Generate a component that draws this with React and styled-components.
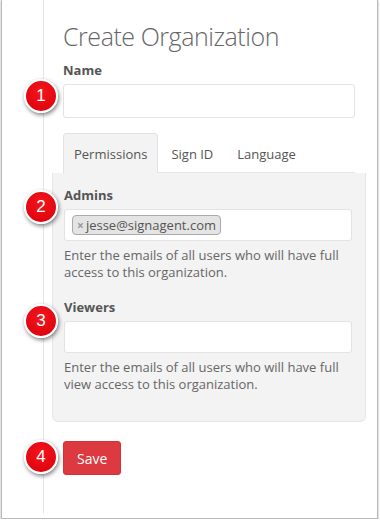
import styled, { createGlobalStyle } from "styled-components";

const GlobalStyle = createGlobalStyle`
  html, body {
    margin: 0;
    padding: 0;
    background: #fff;
  }
  body {
    font-family: "Open Sans", "Liberation Sans", sans-serif;
    color: #555;
  }
`;

const steps = [
  { n: 1, top: 79 },
  { n: 2, top: 190 },
  { n: 3, top: 304 },
  { n: 4, top: 440 },
];

function App() {
  return (
    <>
      <GlobalStyle />
      <Frame>
        <Gutter />
        <Content>
          <Title>Create Organization</Title>
          <Label gap={10}>Name</Label>
          <Input tall />

          <Tabs>
            <Tab active>Permissions</Tab>
            <Tab>Sign ID</Tab>
            <Tab>Language</Tab>
          </Tabs>
          <Panel>
            <Label gap={0}>Admins</Label>
            <Input>
              <Tag>
                <span>×</span>jesse@signagent.com
              </Tag>
            </Input>
            <Help>
              Enter the emails of all users who will have full access to this
              organization.
            </Help>

            <Label gap={17}>Viewers</Label>
            <Input />
            <Help>
              Enter the emails of all users who will have full view access to
              this organization.
            </Help>
          </Panel>

          <SaveButton>Save</SaveButton>
        </Content>

        {steps.map((s) => (
          <Step key={s.n} style={{ top: s.top }}>
            {s.n}
          </Step>
        ))}
      </Frame>
    </>
  );
}

const Frame = styled.div`
  position: relative;
  box-sizing: border-box;
  display: flex;
  width: 377px;
  height: 519px;
  margin-left: 1px;
  background: #fff;
  border: 1px solid #b9b9b9;
  border-top: none;
  box-shadow: 0 1px 2px rgba(0, 0, 0, 0.35);
`;

const Gutter = styled.div`
  flex: none;
  width: 41px;
  margin-bottom: 4px;
  border-right: 1px solid #e6e6e6;
`;

const Content = styled.div`
  flex: 1;
  padding: 21px 22px 0 19px;
  display: flex;
  flex-direction: column;
  align-items: flex-start;
`;

const Title = styled.h1`
  margin: 0;
  font-size: 25px;
  font-weight: 300;
  line-height: 30px;
  letter-spacing: -0.45px;
  color: #666;
`;

const Label = styled.div`
  margin-top: ${(p) => p.gap}px;
  font-size: 13px;
  font-weight: 700;
  line-height: 18px;
  color: #555;
`;

const Input = styled.div`
  box-sizing: border-box;
  align-self: stretch;
  display: flex;
  align-items: center;
  height: ${(p) => (p.tall ? "34px" : "32px")};
  margin-top: 5px;
  padding: 0 7px;
  background: #fff;
  border: 1px solid #e3e3e3;
  border-radius: 3px;
`;

const Tag = styled.span`
  display: inline-flex;
  align-items: center;
  height: 18px;
  padding: 0 4px;
  font-size: 13px;
  color: #555;
  background: #e4e4e4;
  border: 1px solid #aaa;
  border-radius: 4px;

  span {
    margin-right: 2px;
    font-size: 12px;
    color: #999;
    font-weight: 700;
  }
`;

const Tabs = styled.div`
  display: flex;
  align-self: stretch;
  margin-top: 15px;
  border-bottom: 1px solid #e6e6e6;
`;

const Tab = styled.div`
  box-sizing: border-box;
  height: 40px;
  margin-bottom: -1px;
  padding: 0 10px;
  font-size: 13px;
  line-height: 40px;
  color: #555;
  background: ${(p) => (p.active ? "#f3f3f3" : "transparent")};
  border: 1px solid ${(p) => (p.active ? "#e2e2e2" : "transparent")};
  border-bottom: none;
  border-radius: 4px 4px 0 0;
  & + & {
    margin-left: 2px;
  }
`;

const Panel = styled.div`
  box-sizing: border-box;
  align-self: stretch;
  margin: 0 -11px;
  padding: 13px 13px 28px 11px;
  background: #f3f3f3;
  border: 1px solid #e6e6e6;
  border-top: none;
  border-radius: 0 0 6px 6px;
`;

const Help = styled.p`
  margin: 6px 0 0;
  font-size: 13px;
  line-height: 17px;
  color: #666;
`;

const SaveButton = styled.button`
  margin-top: 19px;
  height: 34px;
  padding: 0 13px;
  font-family: inherit;
  font-size: 14px;
  color: #fff;
  background: #dc3940;
  border: 1px solid #d3323a;
  border-radius: 3px;
`;

const Step = styled.div`
  position: absolute;
  left: 22px;
  width: 30px;
  height: 30px;
  display: flex;
  align-items: center;
  justify-content: center;
  font-family: "Liberation Sans", Arial, sans-serif;
  font-size: 17px;
  color: #fff;
  background: radial-gradient(circle at 50% 35%, #f5151c, #d8000a);
  border: 2px solid #fff;
  border-radius: 50%;
  box-shadow: 1px 2px 4px rgba(0, 0, 0, 0.5);
`;

export default App;
